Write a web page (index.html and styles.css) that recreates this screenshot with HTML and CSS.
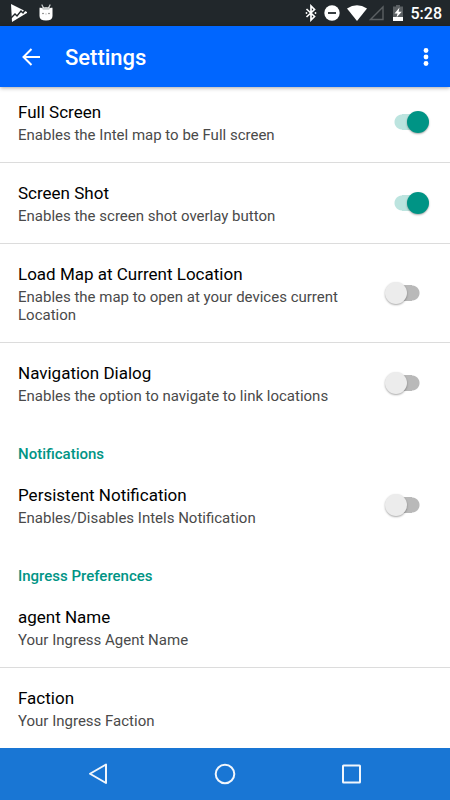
FILE: index.html
```html
<!DOCTYPE html>
<html lang="en">
<head>
<meta charset="utf-8">
<meta name="viewport" content="width=device-width, initial-scale=1">
<title>Settings</title>
<link rel="stylesheet" href="styles.css">
</head>
<body>
<div class="status">
  <svg class="play" width="16" height="20" viewBox="0 0 16 20" aria-hidden="true">
    <path d="M0 1 L16 9 Q17 10 15 10.500 L1 19 Z" fill="#fff"/>
    <path d="M0 15 L4 11 L6 13 L10 8 L12 10 L14 7" fill="none" stroke="#21272b" stroke-width="1.400"/>
  </svg>
  <svg width="14" height="18" viewBox="0 0 14 18" aria-hidden="true">
    <path d="M3 1 L4.500 4 M11 1 L9.500 4" stroke="#c9cccd" stroke-width="1.300" stroke-linecap="round"/>
    <path d="M0.500 4.500 Q0.500 3 2 4 Q7 2.500 12 4 Q13.500 3 13.500 4.500 V12 Q13.500 16.500 7 16.500 Q0.500 16.500 0.500 12 Z" fill="#fff"/>
    <path d="M2.500 4 H11.500 L10 5.800 H4 Z" fill="#c9cccd"/>
    <circle cx="4" cy="9.500" r="0.700" fill="#555"/><circle cx="10" cy="9.500" r="0.700" fill="#555"/>
    <path d="M6 10 H8" stroke="#bbb" stroke-width="0.700"/>
  </svg>
  <div class="status-right">
    <svg width="12" height="18" viewBox="0 0 12 18" aria-hidden="true">
      <path d="M1.500 5 L9.500 12.500 L6 16 V2 L9.500 5.500 L1.500 13" fill="none" stroke="#fff" stroke-width="1.700"/>
      <circle cx="1.500" cy="9" r="0.900" fill="#fff"/><circle cx="10.500" cy="9" r="0.900" fill="#fff"/>
    </svg>
    <svg width="16" height="16" viewBox="0 0 16 16" aria-hidden="true">
      <circle cx="8" cy="8" r="7.700" fill="#fff"/><path d="M4 8 H12" stroke="#21272b" stroke-width="1.800"/>
    </svg>
    <svg width="20" height="16" viewBox="0 0 20 16" aria-hidden="true">
      <path d="M0 3.500 Q10 -3 20 3.500 L10 16 Z" fill="#fff"/>
    </svg>
    <svg class="signal" width="15" height="16" viewBox="0 0 15 16" aria-hidden="true">
      <path d="M1.500 14.500 H14 V2 Z" fill="none" stroke="#5b6063" stroke-width="1.400"/>
    </svg>
    <svg class="battery" width="10" height="16" viewBox="0 0 10 16" aria-hidden="true">
      <path d="M3 0 H7 V1.500 H10 V12 H0 V1.500 H3 Z" fill="#5b6063"/>
      <path d="M0 12 H10 V16 H0 Z" fill="#fff"/>
      <path d="M6.500 2.500 L1.500 8.500 H4.500 L3.500 12.500 L8.800 6.800 H5.600 Z" fill="#fff"/>
    </svg>
    <time>5:28</time>
  </div>
</div>

<header class="appbar">
  <button class="icon-button" aria-label="Back">
    <svg width="18" height="18" viewBox="0 0 18 18" aria-hidden="true"><path d="M18 9 H2 M9.500 1 L1.500 9 L9.500 17" fill="none" stroke="#fff" stroke-width="2"/></svg>
  </button>
  <h1>Settings</h1>
  <button class="icon-button" aria-label="More options">
    <svg width="6" height="20" viewBox="0 0 6 20" aria-hidden="true" fill="#fff"><circle cx="3" cy="3.500" r="2.400"/><circle cx="3" cy="10" r="2.400"/><circle cx="3" cy="16.500" r="2.400"/></svg>
  </button>
</header>

<main class="list">
  <label class="row divided">
    <span class="text"><span class="title">Full Screen</span><span class="summary">Enables the Intel map to be Full screen</span></span>
    <input class="switch" type="checkbox" role="switch" checked>
  </label>
  <label class="row divided">
    <span class="text"><span class="title">Screen Shot</span><span class="summary">Enables the screen shot overlay button</span></span>
    <input class="switch" type="checkbox" role="switch" checked>
  </label>
  <label class="row divided">
    <span class="text"><span class="title">Load Map at Current Location</span><span class="summary">Enables the map to open at your devices current Location</span></span>
    <input class="switch" type="checkbox" role="switch">
  </label>
  <label class="row">
    <span class="text"><span class="title">Navigation Dialog</span><span class="summary">Enables the option to navigate to link locations</span></span>
    <input class="switch" type="checkbox" role="switch">
  </label>
  <h2>Notifications</h2>
  <label class="row">
    <span class="text"><span class="title">Persistent Notification</span><span class="summary">Enables/Disables Intels Notification</span></span>
    <input class="switch" type="checkbox" role="switch">
  </label>
  <h2>Ingress Preferences</h2>
  <button class="row divided">
    <span class="text"><span class="title">agent Name</span><span class="summary">Your Ingress Agent Name</span></span>
  </button>
  <button class="row">
    <span class="text"><span class="title">Faction</span><span class="summary">Your Ingress Faction</span></span>
  </button>
</main>

<nav class="navbar">
  <button aria-label="Back"><svg width="22" height="22" viewBox="0 0 22 22" aria-hidden="true"><path d="M18 1.500 V20 L2 10.750 Z"/></svg></button>
  <button aria-label="Home"><svg width="22" height="22" viewBox="0 0 22 22" aria-hidden="true"><circle cx="11" cy="11" r="9.300"/></svg></button>
  <button aria-label="Recent apps"><svg width="22" height="22" viewBox="0 0 22 22" aria-hidden="true"><rect x="3" y="2.500" width="17" height="17" rx="0.500"/></svg></button>
</nav>
</body>
</html>
```
FILE: styles.css
```css
* { box-sizing: border-box; }

body {
  margin: 0;
  height: 100vh;
  display: flex;
  flex-direction: column;
  overflow: hidden;
  background: #fff;
  font-family: Roboto, "Liberation Sans", sans-serif;
}

button {
  border: 0;
  padding: 0;
  background: none;
  font: inherit;
}

svg { display: block; flex: none; }

.status {
  flex: none;
  display: flex;
  align-items: center;
  gap: 12px;
  height: 26px;
  padding: 0 8px 0 11px;
  background: #21272b;
  color: #fff;
}

.status-right {
  display: flex;
  align-items: center;
  gap: 7px;
  margin-left: auto;
}

.status-right time {
  margin-left: 1px;
  font-size: 16px;
  font-weight: 500;
  line-height: 18px;
  padding-top: 2px;
}

.signal { margin-left: -5px; }
.battery { margin-left: 2px; }

.appbar {
  flex: none;
  display: flex;
  align-items: center;
  height: 61px;
  padding: 0 15px 0 13px;
  background: #0066ff;
  color: #fff;
  z-index: 1;
  box-shadow: 0 1px 4px rgba(0, 0, 0, 0.35);
}

.appbar h1 {
  flex: 1;
  margin: 0;
  padding: 2px 0 0 16px;
  font-size: 22px;
  font-weight: 500;
  line-height: 28px;
}

.icon-button {
  display: flex;
  align-items: center;
  justify-content: center;
  min-width: 18px;
  height: 44px;
}

.appbar .icon-button:first-child { width: 36px; }

.list {
  flex: 1;
  min-height: 0;
  margin-top: -5px;
  overflow: hidden;
}

.row {
  display: flex;
  align-items: center;
  gap: 20px;
  width: 100%;
  padding: 17px 21px 18px 18px;
  border-bottom: 1px solid transparent;
  text-align: left;
}

.divided { border-bottom-color: #dcdcdc; }

.text { flex: 1; }

.title, .summary { display: block; }

.title {
  font-size: 17px;
  line-height: 26px;
  color: #000;
}

.summary {
  padding-top: 1px;
  font-size: 15px;
  line-height: 18px;
  color: #4a4a4a;
}

.list h2 {
  margin: 0;
  padding: 21px 18px 2px;
  font-size: 15px;
  font-weight: 500;
  line-height: 18px;
  color: #009485;
}

.switch {
  appearance: none;
  flex: none;
  display: flex;
  align-items: center;
  width: 44px;
  height: 22px;
  margin: 0;
  border-radius: 11px;
  background: linear-gradient(#b9b9b9, #b9b9b9) center / 10px 16px no-repeat,
    radial-gradient(circle at 17px 11px, #b9b9b9 7px, transparent 8px),
    radial-gradient(circle at 27px 11px, #b9b9b9 7px, transparent 8px);
}

.switch::before {
  content: "";
  width: 22px;
  height: 22px;
  border-radius: 50%;
  background: #ececec;
  box-shadow: 0 1px 2px rgba(0, 0, 0, 0.35);
}

.switch:checked {
  justify-content: flex-end;
  background: linear-gradient(#bce4df, #bce4df) center / 10px 16px no-repeat,
    radial-gradient(circle at 17px 11px, #bce4df 7px, transparent 8px),
    radial-gradient(circle at 27px 11px, #bce4df 7px, transparent 8px);
}

.switch:checked::before { background: #009485; }

.navbar {
  flex: none;
  display: flex;
  justify-content: center;
  height: 52px;
  background: #1976d4;
}

.navbar button {
  display: flex;
  align-items: center;
  justify-content: center;
  width: 28%;
}

.navbar svg {
  fill: none;
  stroke: #f1f6fc;
  stroke-width: 2;
  stroke-linejoin: round;
}
```
